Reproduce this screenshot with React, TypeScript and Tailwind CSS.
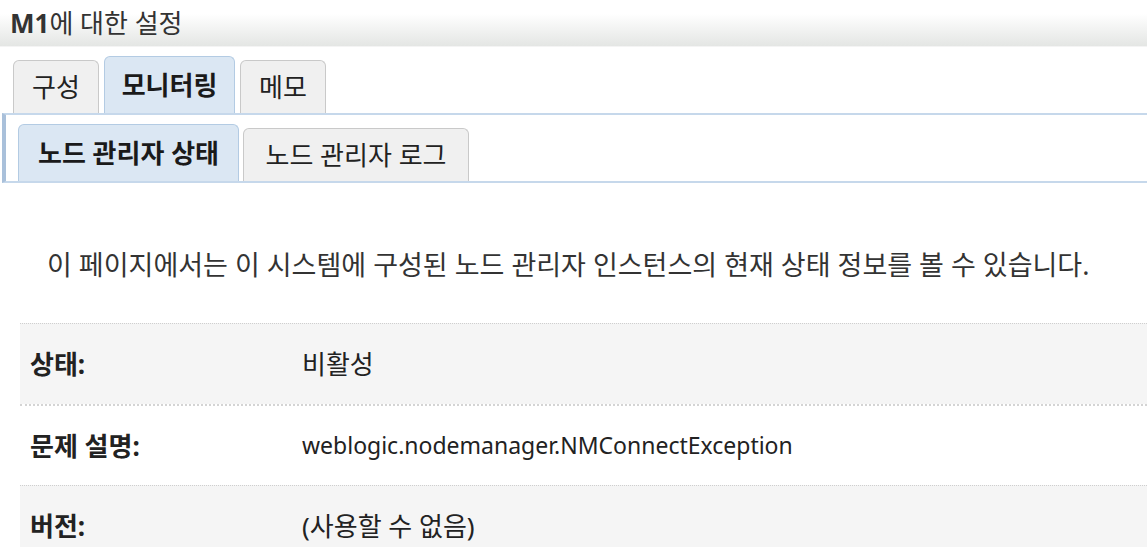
import React from 'react';

const font = { fontFamily: '"Noto Sans", "Noto Sans CJK KR", sans-serif' };

const Tab: React.FC<{ label: string; active?: boolean; className?: string }> = ({ label, active = false, className = '' }) => (
  <div
    className={`flex items-center justify-center rounded-t-[6px] border border-b-0 ${
      active
        ? 'border-[#b3cbe3] bg-[#dbe7f3] font-bold text-[#1a1a1a]'
        : 'border-[#c9c9c9] bg-[#f0f0f0] text-[#222]'
    } ${className}`}
  >
    {label}
  </div>
);

const rows = [
  { label: '상태:', value: '비활성', latin: false, shade: true, border: 'border-t border-dotted border-[#cfcfcf]' },
  { label: '문제 설명:', value: 'weblogic.nodemanager.NMConnectException', latin: true, shade: false, border: 'border-t-2 border-dotted border-[#d4d4d4]' },
  { label: '버전:', value: '(사용할 수 없음)', latin: false, shade: true, border: 'border-t border-dotted border-[#cfcfcf]' },
];

export default function App() {
  return (
    <div className="h-[547px] w-[1147px] overflow-hidden bg-white text-[#222]" style={font}>
      {/* title bar */}
      <div className="flex h-[47px] items-center bg-gradient-to-b from-white from-30% to-[#e4e6e4] pl-[10px] text-[26px] leading-none text-[#333] border-b border-[#f4f4f4]">
        <span className="font-bold">M1</span>
        <span>에 대한 설정</span>
      </div>

      {/* main tabs */}
      <div className="mt-[9px] flex h-[57px] items-end gap-[5px] pl-[13px] text-[26px] leading-none">
        <Tab label="구성" className="h-[53px] w-[86px]" />
        <Tab label="모니터링" active className="h-[57px] w-[131px]" />
        <Tab label="메모" className="h-[53px] w-[86px]" />
      </div>

      {/* sub tab panel */}
      <div className="ml-[2px] flex h-[70px] items-end border-y-2 border-l-4 border-y-[#c6d8eb] border-l-[#a9c0da] pl-[12px] text-[26px] leading-none">
        <div className="flex items-end gap-[4px]">
          <Tab label="노드 관리자 상태" active className="h-[57px] w-[221px]" />
          <Tab label="노드 관리자 로그" className="h-[53px] w-[226px]" />
        </div>
      </div>

      {/* description */}
      <p className="mt-[68px] h-[28px] pl-[47px] text-[27px] leading-[28px] text-[#333]">
        이 페이지에서는 이 시스템에 구성된 노드 관리자 인스턴스의 현재 상태 정보를 볼 수 있습니다.
      </p>

      {/* status table */}
      <div className="ml-[20px] mt-[44px]">
        {rows.map((r) => (
          <div
            key={r.label}
            className={`flex h-[81px] items-center text-[26px] leading-none ${r.border} ${r.shade ? 'bg-[#f5f5f5]' : 'bg-white'}`}
          >
            <div className="w-[282px] pl-[10px] font-bold text-[#222]">{r.label}</div>
            <div className={r.latin ? 'text-[23px] text-[#222]' : 'text-[#222]'}>{r.value}</div>
          </div>
        ))}
      </div>
    </div>
  );
}
